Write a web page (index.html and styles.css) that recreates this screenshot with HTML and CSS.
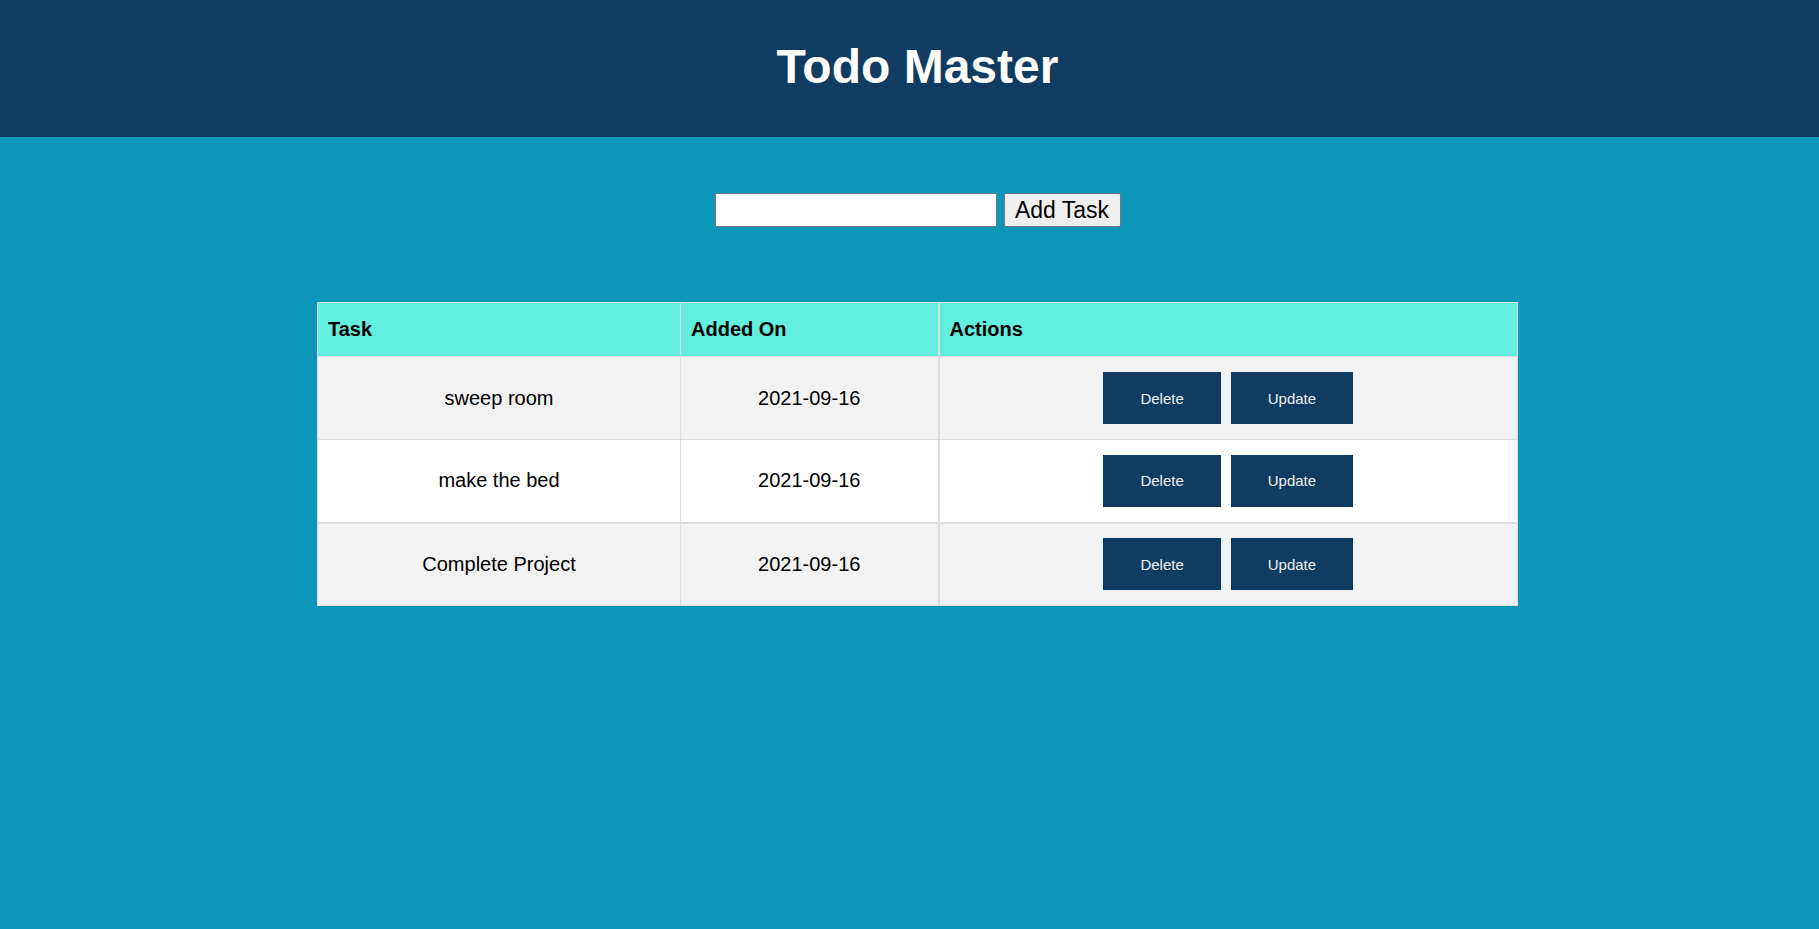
FILE: index.html
```html
<!DOCTYPE html>
<html lang="en">
<head>
<meta charset="utf-8">
<title>Todo Master</title>
<link rel="stylesheet" href="styles.css">
</head>
<body>
<header class="topbar">
  <h1 class="title">Todo Master</h1>
</header>
<main class="content">
  <form class="add-form">
    <input class="task-input" type="text">
    <button class="add-btn" type="button">Add Task</button>
  </form>
  <table class="tasks">
    <thead>
      <tr>
        <th class="col-task">Task</th>
        <th class="col-date">Added On</th>
        <th class="col-actions">Actions</th>
      </tr>
    </thead>
    <tbody>
      <tr>
        <td>sweep room</td>
        <td class="date">2021-09-16</td>
        <td><button class="act-btn">Delete</button><button class="act-btn">Update</button></td>
      </tr>
      <tr class="thick">
        <td>make the bed</td>
        <td class="date">2021-09-16</td>
        <td><button class="act-btn">Delete</button><button class="act-btn">Update</button></td>
      </tr>
      <tr>
        <td>Complete Project</td>
        <td class="date">2021-09-16</td>
        <td><button class="act-btn">Delete</button><button class="act-btn">Update</button></td>
      </tr>
    </tbody>
  </table>
</main>
</body>
</html>
```
FILE: styles.css
```css
html, body {
  margin: 0;
  padding: 0;
}
body {
  background: #0b96ba;
  font-family: "Liberation Sans", Arial, sans-serif;
  min-height: 929px;
}
.topbar {
  background: #0f3c60;
  padding: 39px 0 43px 16px;
}
.title {
  margin: 0;
  text-align: center;
  color: #ffffff;
  font-size: 48px;
  line-height: 55px;
  font-weight: bold;
}
.content {
  padding: 56px 0 0 16px;
}
.add-form {
  display: flex;
  justify-content: center;
  gap: 7px;
  margin: 0;
}
.task-input {
  box-sizing: border-box;
  width: 282px;
  height: 34px;
  margin: 0;
  border: 1px solid #767676;
  background: #fff;
  padding: 0 4px;
}
.add-btn {
  box-sizing: border-box;
  width: 117px;
  height: 34px;
  margin: 0;
  padding: 0 6px;
  font-family: "Liberation Sans", Arial, sans-serif;
  font-size: 23px;
  color: #000;
  background: #efefef;
  border: 1px solid #767676;
  border-radius: 2px;
}
.tasks {
  margin: 75px auto 0;
  width: 1200px;
  table-layout: fixed;
  border-collapse: collapse;
  font-size: 20px;
  color: #000;
}
.tasks th, .tasks td {
  border: 1px solid #dddddd;
}
.tasks th {
  background: #62efdf;
  text-align: left;
  font-weight: bold;
  padding: 0 10px;
  height: 54px;
  box-sizing: border-box;
}
.col-task { width: 363px; }
.col-date { width: 258px; }
.col-actions { width: 579px; }
.tasks .col-date, .tasks .date {
  border-right: 2px solid #dddddd;
}
.tasks td {
  text-align: center;
  height: 83px;
  padding: 0 10px;
  box-sizing: border-box;
}
.tasks tr.thick td {
  border-bottom: 2px solid #dddddd;
}
.tasks tbody tr:nth-child(odd) td {
  background: #f2f2f2;
}
.tasks tbody tr:nth-child(even) td {
  background: #ffffff;
}
.act-btn {
  box-sizing: border-box;
  height: 52px;
  padding: 0 37px;
  margin: 0 5px;
  border: none;
  background: #0f3c60;
  color: #f0f0f0;
  font-family: "Liberation Sans", Arial, sans-serif;
  font-size: 15px;
  vertical-align: middle;
}
```
